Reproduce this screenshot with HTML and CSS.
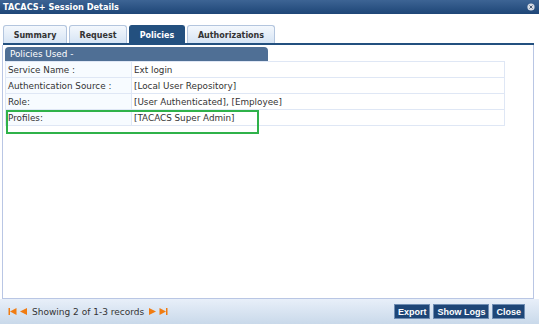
FILE: index.html
```html
<!DOCTYPE html>
<html lang="en">
<head>
    <meta charset="UTF-8">
    <title>TACACS+ Session Details</title>
    <link rel="stylesheet" href="styles.css">
</head>
<body>
    <div class="dialog">
        <div class="titlebar">
            <span>TACACS+ Session Details</span>
            <svg class="close-x" width="8" height="8" viewBox="0 0 8 8">
                <circle cx="4" cy="4" r="3.6" fill="#d8dde6"/>
                <path d="M2.5 2.5 L5.5 5.5 M5.5 2.5 L2.5 5.5" stroke="#4a5b72" stroke-width="1"/>
            </svg>
        </div>

        <div class="tabs">
            <div class="tab tab-summary">Summary</div>
            <div class="tab tab-request">Request</div>
            <div class="tab tab-policies active">Policies</div>
            <div class="tab tab-auth">Authorizations</div>
        </div>

        <div class="panel">
            <div class="section-head">Policies Used -</div>
            <table class="details">
                <tr><td class="label">Service Name :</td><td>Ext login</td></tr>
                <tr><td class="label">Authentication Source :</td><td>[Local User Repository]</td></tr>
                <tr><td class="label">Role:</td><td>[User Authenticated], [Employee]</td></tr>
                <tr><td class="label">Profiles:</td><td>[TACACS Super Admin]</td></tr>
            </table>
            <!-- highlight box drawn over the profiles row -->
            <div class="highlight"></div>
        </div>

        <div class="footer">
            <div class="pager">
                <svg width="9" height="9" viewBox="0 0 9 9"><rect x="0.5" y="1" width="1.5" height="7" fill="#f07c12"/><path d="M8.5 1 L2 4.5 L8.5 8 Z" fill="#f07c12"/></svg>
                <svg width="9" height="9" viewBox="0 0 9 9"><path d="M8 1 L1 4.5 L8 8 Z" fill="#f07c12"/></svg>
                <span class="pager-text">Showing 2 of 1-3 records</span>
                <svg width="9" height="9" viewBox="0 0 9 9"><path d="M1 1 L8 4.5 L1 8 Z" fill="#f07c12"/></svg>
                <svg width="9" height="9" viewBox="0 0 9 9"><path d="M0.5 1 L7 4.5 L0.5 8 Z" fill="#f07c12"/><rect x="7" y="1" width="1.5" height="7" fill="#f07c12"/></svg>
            </div>
            <div class="actions">
                <button>Export</button>
                <button>Show Logs</button>
                <button>Close</button>
            </div>
        </div>
    </div>
</body>
</html>
```

FILE: styles.css
```css
body {
    margin: 0;
    background: #fff;
    font-family: "DejaVu Sans", Verdana, sans-serif;
    font-size: 8.8px;
    color: #333;
}
.dialog {
    width: 539px;
}
.titlebar {
    height: 14px;
    display: flex;
    align-items: center;
    justify-content: space-between;
    padding: 0 4px 0 3px;
    background: linear-gradient(#3d6494, #1e4677);
    color: #fff;
    font-weight: bold;
    font-size: 8.2px;
}
.close-x {
    display: block;
}

/* Tabs */
.tabs {
    display: flex;
    gap: 2px;
    margin: 11px 5px 0 3px;
    border-bottom: 2px solid #23507f;
}
.tab {
    height: 17px;
    line-height: 19px;
    text-align: center;
    font-size: 8px;
    font-weight: bold;
    color: #333;
    background: linear-gradient(#f4f8fd, #d6e4f4);
    border: 1px solid #b3c5de;
    border-bottom: none;
    border-radius: 3px 3px 0 0;
}
.tab-summary { width: 62px; }
.tab-request { width: 56px; }
.tab-policies { width: 54px; }
.tab-auth { width: 86px; }
.tab.active {
    background: #23507f;
    border-color: #23507f;
    color: #fff;
}

/* Panel */
.panel {
    position: relative;
    height: 251px;
    margin: 0 5px 0 2px;
    padding: 2px 28px 0 2px;
    border: 1px solid #b9c6e4;
    border-top: none;
}
.section-head {
    width: 258px;
    height: 14px;
    line-height: 15px;
    padding-left: 5px;
    background: #4f6f95;
    color: #fff;
    border-radius: 4px 4px 0 0;
}
.details {
    width: 100%;
    border-collapse: collapse;
}
.details td {
    height: 15px;
    padding: 0 2px;
    border: 1px solid #dfe7f5;
    color: #333;
}
.details td.label {
    width: 121px;
    background: #f7fbff;
}
.highlight {
    position: absolute;
    left: 3px;
    top: 65px;
    width: 249px;
    height: 20px;
    border: 2px solid #2fb24a;
}

/* Footer */
.footer {
    height: 25px;
    display: flex;
    align-items: center;
    justify-content: space-between;
    padding: 0 14px 0 8px;
    background: linear-gradient(#e8eff9, #c9d9ea);
}
.pager {
    display: flex;
    align-items: center;
    gap: 4px;
    font-size: 9px;
}
.pager svg + svg {
    margin-left: -2px;
}
.actions {
    display: flex;
    gap: 3px;
}
.actions button {
    height: 15px;
    padding: 0 3px;
    border: 1px solid #6f8db3;
    background: #1e4677;
    color: #fff;
    font-family: "Liberation Sans", Arial, sans-serif;
    font-weight: bold;
    font-size: 9px;
    cursor: pointer;
}
```
